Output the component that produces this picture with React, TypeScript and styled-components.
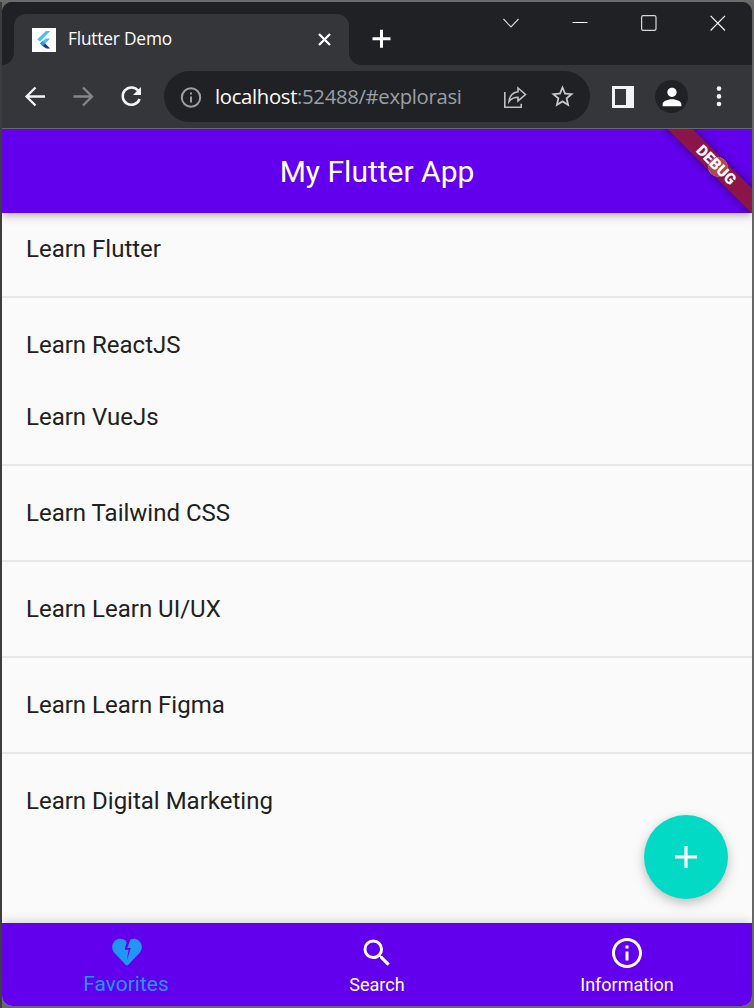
import React from 'react';
import styled, { createGlobalStyle } from 'styled-components';

const GlobalStyle = createGlobalStyle`
  * { box-sizing: border-box; }
  html, body { margin: 0; padding: 0; }
  body { font-family: Roboto, "Liberation Sans", sans-serif; overflow: hidden; }
  svg { display: block; flex: none; }
`;

const Desktop = styled.div`
  width: 754px;
  height: 1008px;
  padding: 2px;
  background:
    linear-gradient(#6b6b6b, #6b6b6b) 0 0 / 100% 2px no-repeat,
    linear-gradient(90deg, #3d3d3d 0 2px, #676767 2px);
`;

const BrowserWindow = styled.div`
  display: flex;
  flex-direction: column;
  width: 750px;
  height: 1004px;
  border-radius: 10px;
  overflow: hidden;
  background: #202124;
`;

const TitleBar = styled.header`
  display: flex;
  height: 63px;
  background: #202124;
`;

const Tab = styled.div`
  position: relative;
  display: flex;
  align-items: center;
  width: 335px;
  height: 51px;
  margin: 12px 0 0 12px;
  padding: 0 18px;
  border-radius: 12px 12px 0 0;
  background: #35363a;

  &::before,
  &::after {
    content: "";
    position: absolute;
    bottom: 0;
    width: 12px;
    height: 12px;
  }
  &::before {
    left: -12px;
    background: radial-gradient(circle at 0 0, transparent 11.5px, #35363a 12.3px);
  }
  &::after {
    right: -12px;
    background: radial-gradient(circle at 100% 0, transparent 11.5px, #35363a 12.3px);
  }
`;

const TabTitle = styled.span`
  flex: 1;
  margin-left: 12px;
  padding-bottom: 2px;
  color: #fff;
  font: 17.3px/24px "Open Sans", "Noto Sans", sans-serif;
  letter-spacing: -0.18px;
`;

const NewTab = styled.div`
  margin: 27px 0 0 23px;
`;

const WindowControls = styled.div`
  display: flex;
  gap: 53px;
  margin: 12px 26px 0 auto;
`;

const Toolbar = styled.nav`
  display: flex;
  align-items: center;
  height: 63px;
  padding: 0 16px 0 21px;
  background: #35363a;
`;

const NavButtons = styled.div`
  display: flex;
  gap: 24px;
`;

const AddressBar = styled.div`
  display: flex;
  align-items: center;
  width: 426px;
  height: 51px;
  margin-left: 21px;
  padding: 0 14px 0 16px;
  border-radius: 26px;
  background: #202124;
`;

const Url = styled.span`
  flex: 1;
  margin-left: 13px;
  padding-bottom: 2px;
  color: #9aa0a6;
  font: 20.3px/28px "Open Sans", "Noto Sans", sans-serif;
  letter-spacing: -0.32px;
`;

const Host = styled.span`
  color: #fff;
`;

const AddressActions = styled.div`
  display: flex;
  align-items: center;
  gap: 22px;
`;

const BrowserActions = styled.div`
  display: flex;
  align-items: center;
  width: 124px;
  margin-left: auto;
`;

const Avatar = styled.div`
  display: grid;
  place-items: center;
  width: 33px;
  height: 33px;
  margin: 0 24px 0 21px;
  border-radius: 50%;
  background: #202124;
`;

const AppFrame = styled.div`
  position: relative;
  display: flex;
  flex: 1;
  flex-direction: column;
  overflow: hidden;
  border-top: 1px solid #68676c;
  background: #fafafa;
`;

const AppBar = styled.header`
  z-index: 1;
  display: flex;
  align-items: center;
  justify-content: center;
  height: 84px;
  background: #6200ee;
  box-shadow: 0 3px 6px -1px rgba(0, 0, 0, 0.2), 0 5px 9px rgba(0, 0, 0, 0.1);
`;

const AppTitle = styled.h1`
  margin: 0;
  padding-top: 2px;
  color: #fff;
  font-size: 30px;
  font-weight: 400;
  line-height: 36px;
`;

const List = styled.main`
  flex: 1;
`;

const ListItem = styled.div`
  display: flex;
  align-items: center;
  height: 72px;
  padding: 0 24px;
  color: #212121;
  font-size: 24px;
`;

const Divider = styled.hr`
  height: 2px;
  margin: 11px 0;
  border: 0;
  background: #e8e8e8;
`;

const Fab = styled.button`
  position: absolute;
  right: 24px;
  bottom: 107px;
  display: grid;
  place-items: center;
  width: 84px;
  height: 84px;
  padding: 0;
  border: 0;
  border-radius: 50%;
  background: #03dac5;
  box-shadow: 0 3px 8px rgba(0, 0, 0, 0.15), 0 5px 15px rgba(0, 0, 0, 0.12);
`;

const BottomBar = styled.footer`
  display: flex;
  height: 83px;
  background: #6200ee;
  box-shadow: 0 -2px 9px rgba(0, 0, 0, 0.15);
`;

const Destination = styled.div<{ $active?: boolean }>`
  display: flex;
  flex: 1;
  flex-direction: column;
  align-items: center;
  padding-top: ${(p) => (p.$active ? 11 : 12)}px;
  color: ${(p) => (p.$active ? '#2196f3' : '#fff')};
  font-size: ${(p) => (p.$active ? 21 : 18)}px;
  line-height: 28px;
`;

const DestinationLabel = styled.span<{ $active?: boolean }>`
  margin-right: ${(p) => (p.$active ? 2 : 0)}px;
`;

const DebugCorner = styled.div`
  position: absolute;
  z-index: 2;
  top: 0;
  right: 0;
  width: 100px;
  height: 84px;
  overflow: hidden;
`;

const DebugBanner = styled.div`
  position: absolute;
  top: 26.75px;
  left: -15.75px;
  width: 160px;
  height: 18px;
  transform: rotate(45deg);
  background: #8b1449;
  box-shadow: 0 0 9px rgba(0, 0, 0, 0.5);
`;

const TouchSpot = styled.div`
  position: absolute;
  top: 28px;
  left: 56px;
  width: 20px;
  height: 20px;
  border: 1px dotted rgba(190, 150, 255, 0.6);
  border-radius: 50%;
  background: linear-gradient(45deg, transparent 8%, rgba(205, 105, 70, 0.6) 8% 88%, transparent 88%);
`;

const BannerText = styled.span`
  position: absolute;
  top: 26.75px;
  left: 24.25px;
  width: 80px;
  height: 18px;
  transform: rotate(45deg);
  color: #fff;
  font-size: 15.3px;
  font-weight: 900;
  line-height: 18px;
  text-align: center;
`;

type IconProps = { size: number; d: string; color?: string };
const Icon = ({ size, d, color = 'currentColor' }: IconProps) => (
  <svg width={size} height={size} viewBox="0 0 24 24" fill={color}>
    <path d={d} />
  </svg>
);

const INFO =
  'M11 7h2v2h-2zm0 4h2v6h-2zm1-9C6.48 2 2 6.48 2 12s4.48 10 10 10 10-4.48 10-10S17.52 2 12 2zm0 18c-4.41 0-8-3.59-8-8s3.59-8 8-8 8 3.59 8 8-3.59 8-8 8z';
const SEARCH =
  'M15.5 14h-.79l-.28-.27A6.471 6.471 0 0 0 16 9.5 6.5 6.5 0 1 0 9.5 16c1.61 0 3.09-.59 4.23-1.57l.27.28v.79l5 4.99L20.49 19l-4.99-5zm-6 0C7.01 14 5 11.99 5 9.5S7.01 5 9.5 5 14 7.01 14 9.5 11.99 14 9.5 14z';
const STAR =
  'M22 9.24l-7.19-.62L12 2 9.19 8.63 2 9.24l5.46 4.73L5.82 21 12 17.27 18.18 21l-1.63-7.03L22 9.24zM12 15.4l-3.76 2.27 1-4.28-3.32-2.88 4.38-.38L12 6.1l1.71 4.04 4.38.38-3.32 2.88 1 4.28L12 15.4z';
const PERSON =
  'M12 12c2.21 0 4-1.79 4-4s-1.79-4-4-4-4 1.79-4 4 1.79 4 4 4zm0 2c-2.67 0-8 1.34-8 4v2h16v-2c0-2.66-5.33-4-8-4z';

const Favicon = () => (
  <svg width="24" height="24" viewBox="0 0 24 24">
    <path fill="#fff" d="M0 0h24v24H0z" />
    <path fill="#42bff8" d="M14 3h4.200L8 13.200 5.200 11.600z" />
    <path fill="#42bff8" d="M14 10.400h4.200l-5.100 5.100-2.600 2.600-2.600-2.600z" />
    <path fill="#2897e8" d="M7.900 15.500l2.600-2.400 2.600 2.400-2.500 2.500z" />
    <path fill="#0d3c90" d="M10.600 18l2.500-2.500 5.100 5.100H14.300z" />
  </svg>
);

const BrokenHeart = () => (
  <svg width="36" height="36" viewBox="0 0 36 36">
    <path
      fill="currentColor"
      d="M18 8C14.700 4.300 9.700 3.900 6.300 6.600 2.400 9.800 2.100 15.400 5.500 18.900L16.700 30.800c.8.8 1.800.8 2.600 0L30.500 18.900c3.400-3.500 3.100-9.100-.8-12.300C26.300 3.900 21.300 4.300 18 8z"
    />
    <path fill="#6200ee" d="M16.400 4l1.200 4.200-1.900 7.500h3.900l-1.700 10.500 3.900-12.200H18.300l2.200-6L22 4z" />
  </svg>
);

const Controls = () => (
  <WindowControls>
    <svg width="16" height="19" fill="none" stroke="#d8d8d9" strokeWidth="1.1">
      <path d="M.5 5l7.500 8 7.500-8" />
    </svg>
    <svg width="16" height="19" fill="none" stroke="#fff">
      <path d="M.5 8.500h15" />
    </svg>
    <svg width="16" height="19" fill="none" stroke="#d8d8dc" strokeWidth="1.2">
      <rect x=".6" y="1.6" width="14.4" height="14.8" rx="1.6" />
    </svg>
    <svg width="16" height="19" fill="none" stroke="#f5f5f5" strokeWidth="1.2">
      <path d="M.6 1.800l14.400 14.700M15 1.800L.6 16.500" />
    </svg>
  </WindowControls>
);

const items: { label: string; divided: boolean }[] = [
  { label: 'Learn Flutter', divided: true },
  { label: 'Learn ReactJS', divided: false },
  { label: 'Learn VueJs', divided: true },
  { label: 'Learn Tailwind CSS', divided: true },
  { label: 'Learn Learn UI/UX', divided: true },
  { label: 'Learn Learn Figma', divided: true },
  { label: 'Learn Digital Marketing', divided: false },
];

export default function App() {
  return (
    <Desktop>
      <GlobalStyle />
      <BrowserWindow>
        <TitleBar>
          <Tab>
            <Favicon />
            <TabTitle>Flutter Demo</TabTitle>
            <svg width="13" height="13" stroke="#fff" strokeWidth="2.3">
              <path d="M1 1l11 11M12 1L1 12" />
            </svg>
          </Tab>
          <NewTab>
            <svg width="19" height="19" stroke="#fff" strokeWidth="3">
              <path d="M0.5 9.700h18M9.500.7v18" />
            </svg>
          </NewTab>
          <Controls />
        </TitleBar>
        <Toolbar>
          <NavButtons>
            <svg width="24" height="24" fill="none" stroke="#f1f3f4" strokeWidth="2.300">
              <path d="M22 11.500H4M12.500 2.500l-9 9 9 9" />
            </svg>
            <svg width="24" height="24" fill="none" stroke="#85868a" strokeWidth="2.300">
              <path d="M2.500 11.500H20.500M12 2.500l9 9-9 9" />
            </svg>
            <svg width="24" height="24" fill="none">
              <path d="M19.300 5.800A8.700 8.700 0 1 0 20.600 14" stroke="#f1f3f4" strokeWidth="2.500" />
              <path d="M22 2v8h-8z" fill="#f1f3f4" />
            </svg>
          </NavButtons>
          <AddressBar>
            <svg width="22" height="22" fill="none" stroke="#9aa0a6" strokeWidth="2">
              <circle cx="11" cy="11.5" r="9.2" />
              <path d="M11 10.500v6M11 6.500v2" />
            </svg>
            <Url>
              <Host>localhost</Host>:52488/#explorasi
            </Url>
            <AddressActions>
              <svg width="24" height="24" fill="none" stroke="#bdc1c6" strokeWidth="1.6">
                <path d="M1.800 7v15.200h16.400v-3.400" />
                <path d="M15 3l7.500 6.500-7.500 6.400v-3.600c-4.200 0-6.800 1.200-9 4.200.5-5 3.600-9 9-9.700z" />
              </svg>
              <Icon size={27} d={STAR} color="#c6c8ca" />
            </AddressActions>
          </AddressBar>
          <BrowserActions>
            <svg width="22" height="22">
              <path fill="#f1f3f4" fillRule="evenodd" d="M0 0h22v22H0zM3 3v16h11V3z" />
            </svg>
            <Avatar>
              <Icon size={28} d={PERSON} color="#fff" />
            </Avatar>
            <svg width="24" height="24" fill="#f1f3f4">
              <circle cx="7" cy="3.600" r="2.300" />
              <circle cx="7" cy="11.400" r="2.300" />
              <circle cx="7" cy="19" r="2.300" />
            </svg>
          </BrowserActions>
        </Toolbar>
        <AppFrame>
          <AppBar>
            <AppTitle>My Flutter App</AppTitle>
          </AppBar>
          <List>
            {items.map((item) => (
              <React.Fragment key={item.label}>
                <ListItem>{item.label}</ListItem>
                {item.divided && <Divider />}
              </React.Fragment>
            ))}
          </List>
          <BottomBar>
            <Destination $active>
              <BrokenHeart />
              <DestinationLabel $active>Favorites</DestinationLabel>
            </Destination>
            <Destination>
              <Icon size={36} d={SEARCH} />
              <DestinationLabel>Search</DestinationLabel>
            </Destination>
            <Destination>
              <Icon size={36} d={INFO} />
              <DestinationLabel>Information</DestinationLabel>
            </Destination>
          </BottomBar>
          <Fab aria-label="Add">
            <Icon size={38} d="M19 13h-6v6h-2v-6H5v-2h6V5h2v6h6v2z" color="#fff" />
          </Fab>
          <DebugCorner>
            <DebugBanner />
            <TouchSpot />
            <BannerText>DEBUG</BannerText>
          </DebugCorner>
        </AppFrame>
      </BrowserWindow>
    </Desktop>
  );
}
